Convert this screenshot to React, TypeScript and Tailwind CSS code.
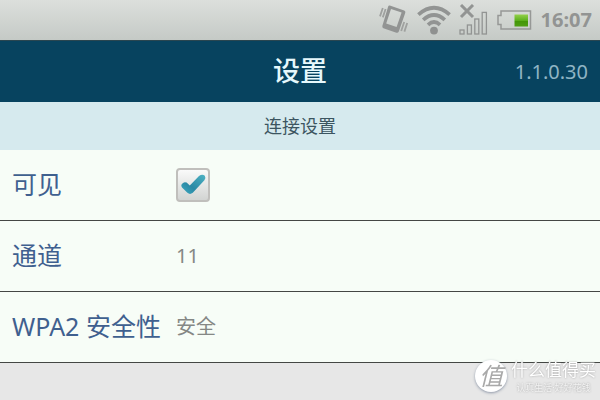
import React, { useState } from 'react';

// ============================================================================
// ICONS
// ============================================================================

const VibrateIcon: React.FC = () => (
  <svg width="30" height="30" viewBox="0 0 30 30" fill="none" className="shrink-0">
    <path fillRule="evenodd" fill="#929493" d="M10.8 0.6 L25.2 5.4 Q26.8 6.2 26.3 7.8 L19.8 26.6 Q19 28.2 17.4 27.7 L4.4 23.2 Q2.8 22.5 3.4 20.8 L9 2 Q9.5 0.3 10.8 0.6 Z M12 4 L7.2 18.4 L17.6 22 L22.6 7.6 Z" />
    <path stroke="#9fa19f" strokeWidth="1.8" d="M3.8 3 L1 11.4 M6.6 4 L3.8 12.4 M25.2 17 L22.2 26 M28.2 18 L25.4 26.6" />
  </svg>
);

const WifiIcon: React.FC = () => (
  <svg width="34" height="30" viewBox="0 0 34 30" fill="none" className="shrink-0">
    <g stroke="#929493" strokeWidth="3.8">
      <path d="M1.4 9.6 Q17 -4.2 32.6 9.6" />
      <path d="M6.2 14.8 Q17 5.2 27.8 14.8" />
      <path d="M11 19.8 Q17 14.4 23 19.8" />
    </g>
    <circle cx="17" cy="25.6" r="3.9" fill="#8f9190" />
  </svg>
);

const SignalIcon: React.FC = () => (
  <svg width="30" height="32" viewBox="0 0 30 32" fill="none" className="shrink-0">
    <path stroke="#929493" strokeWidth="3" d="M2 1 L14 13 M14 1 L2 13" />
    <g stroke="#929493" strokeWidth="1.3">
      <rect x="1" y="26" width="4" height="4" />
      <rect x="8.4" y="21" width="4" height="9" />
      <rect x="15.8" y="15" width="4" height="15" />
      <rect x="23.2" y="8.4" width="4.2" height="21.6" />
    </g>
  </svg>
);

const BatteryIcon: React.FC = () => (
  <svg width="36" height="20" viewBox="0 0 36 20" fill="none" className="shrink-0">
    <defs>
      <linearGradient id="charge" x1="0" y1="0" x2="0" y2="1">
        <stop offset="0" stopColor="#93d04a" />
        <stop offset="0.5" stopColor="#5cb01c" />
        <stop offset="0.55" stopColor="#439607" />
        <stop offset="1" stopColor="#4f9f14" />
      </linearGradient>
    </defs>
    <path stroke="#969896" strokeWidth="1.5" d="M4 1 H33.5 V19 H4 V14.5 H1 V5.5 H4 Z" />
    <rect x="17.5" y="4.5" width="13.5" height="12" fill="url(#charge)" />
  </svg>
);

const CheckMark: React.FC = () => (
  <svg width="34" height="34" viewBox="0 0 34 34" className="pointer-events-none absolute inset-0">
    <defs>
      <linearGradient id="tick" x1="0" y1="1" x2="1" y2="0">
        <stop offset="0" stopColor="#3fa9c0" />
        <stop offset="0.4" stopColor="#2a89a5" />
        <stop offset="1" stopColor="#4fb3c4" />
      </linearGradient>
    </defs>
    <path fill="url(#tick)" d="M5.4 16.8 Q7.4 13 10.6 14.6 L13.8 17.4 L23 8 Q26.4 5.4 28.8 7.8 Q30.2 10 28.4 12.2 L16.8 24.8 Q14 27 11.4 24.8 L6 19.4 Q5 18.2 5.4 16.8 Z" />
  </svg>
);

// ============================================================================
// ROWS
// ============================================================================

interface RowProps {
  label: string;
  htmlFor?: string;
  children: React.ReactNode;
}

const Row: React.FC<RowProps> = ({ label, htmlFor, children }) => (
  <div className="flex h-[71px] items-center border-b border-[#444744] bg-[#f7fdf7] px-3">
    <label htmlFor={htmlFor} className="w-[164px] shrink-0 text-[25px] text-[#3f608f]">
      {label}
    </label>
    {children}
  </div>
);

const App: React.FC = () => {
  const [visible, setVisible] = useState(true);

  return (
    <div className="flex min-h-screen flex-col bg-[#e7e7e7] font-['Noto_Sans','Noto_Sans_CJK_SC',sans-serif]">
      {/* Status bar */}
      <div className="flex h-10 items-center justify-end gap-2 bg-linear-to-b from-[#dcdfdc] to-[#c5cac6] pr-2">
        <VibrateIcon />
        <WifiIcon />
        <SignalIcon />
        <BatteryIcon />
        <span className="text-xl font-bold text-[#929493]">16:07</span>
      </div>

      {/* Title bar */}
      <header className="grid h-[62px] grid-cols-3 items-center border-t border-[#2a4650] bg-[#07435f] px-3">
        <h1 className="col-start-2 text-center text-[27px] font-medium text-[#e6f8fc]">设置</h1>
        <span className="text-right text-xl text-[#8fb4c4]">1.1.0.30</span>
      </header>

      <h2 className="flex h-12 items-center justify-center bg-[#d6eaee] text-lg text-[#3c5560]">
        连接设置
      </h2>

      {/* Settings list */}
      <main>
        <Row label="可见" htmlFor="visible">
          <span className="relative size-[34px]">
            <input
              id="visible"
              type="checkbox"
              checked={visible}
              onChange={(e) => setVisible(e.target.checked)}
              className="block size-[34px] appearance-none rounded-sm border-2 border-[#c0bfbc] bg-linear-to-b from-[#fafafa] to-[#d2d4d2]"
            />
            {visible && <CheckMark />}
          </span>
        </Row>
        <Row label="通道" htmlFor="channel">
          <output id="channel" className="text-xl text-[#858885]">11</output>
        </Row>
        <Row label="WPA2 安全性" htmlFor="security">
          <output id="security" className="text-xl text-[#858885]">安全</output>
        </Row>
      </main>

      {/* Watermark */}
      <div className="fixed right-1 bottom-2 flex items-center gap-1">
        <span className="flex size-8 items-center justify-center rounded-full bg-white text-2xl text-[#a9a9a9] italic shadow-sm shadow-gray-400">
          值
        </span>
        <span className="flex flex-col items-center gap-1 text-white text-shadow-[0_0_2px_#999]">
          <span className="text-[17px] leading-5">什么值得买</span>
          <span className="text-[9px] leading-2 text-[#f4f4f4]">认真生活·好好花钱</span>
        </span>
      </div>
    </div>
  );
};

export default App;
